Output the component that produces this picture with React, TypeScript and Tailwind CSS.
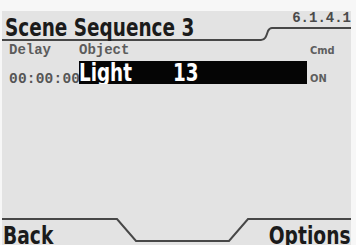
export default function App() {
  const big =
    "font-['DejaVu_Sans_Condensed','DejaVu_Sans',sans-serif] font-stretch-condensed font-bold";
  const mono = "font-['Liberation_Mono','DejaVu_Sans_Mono',monospace]";
  const small = "font-['DejaVu_Sans_Condensed','DejaVu_Sans',sans-serif] font-stretch-condensed font-bold";
  return (
    <div className="w-[356px] h-[245px] bg-[#f7f7f7] overflow-hidden pt-[11px]">
      <div className="ml-[2px] w-[349px] h-[234px] bg-[#e3e3e3] flex flex-col">
        {/* header */}
        <div className="flex items-start h-[30px] shrink-0">
          <div className="w-[259px] h-[30px] border-b-2 border-[#474747] pl-[3px] pt-[4px] overflow-visible whitespace-nowrap">
            <span className={`inline-block origin-left scale-x-[0.82] text-[25px] leading-none text-[#1b1b1b] ${big}`}>
              Scene Sequence 3
            </span>
          </div>
          <svg width="11" height="14" className="mt-[16px] shrink-0" viewBox="0 0 11 14">
            <path d="M0 13 C4 13 5 10 7 4 C8 2 9 1 11 1" stroke="#474747" strokeWidth="2" fill="none" />
          </svg>
          <div className="flex-1 h-[18px] border-b-2 border-[#474747] flex items-end justify-end">
            <span className={`text-[14px] leading-none font-bold text-[#4a4a4a] mb-[2px] ${mono}`}>6.1.4.1</span>
          </div>
        </div>
        {/* body */}
        <div className="grid grid-cols-[70px_228px_1fr] pl-[7px] pt-[2px] items-start">
          <div className={`text-[14px] leading-none text-[#5c5c5c] font-semibold ${mono}`}>Delay</div>
          <div className={`text-[14px] leading-none text-[#5c5c5c] font-semibold ${mono}`}>Object</div>
          <div className={`pl-[3px] pt-[2px] text-[11px] leading-none text-[#5e5e5e] ${small}`}>Cmd</div>
          <div className={`mt-[15px] text-[14.5px] leading-none text-[#555] font-bold whitespace-nowrap tracking-[0.2px] ${mono}`}>
            00:00:00
          </div>
          <div className="mt-[4px] h-[23px] bg-[#050505] flex items-start overflow-hidden whitespace-nowrap">
            <span className={`inline-block origin-left scale-x-[0.85] text-[24px] leading-none text-white ${big}`}>
              Light
            </span>
            <span className={`inline-block origin-left scale-x-[0.85] text-[24px] leading-none text-white ml-[32px] ${big}`}>
              13
            </span>
          </div>
          <div className={`mt-[16px] pl-[3px] text-[11px] leading-none text-[#5e5e5e] ${small}`}>ON</div>
        </div>
        {/* footer */}
        <div className="mt-auto flex items-start h-[27px] shrink-0">
          <div className="w-[113px] h-[27px] border-t-2 border-[#474747] pl-[1px] pt-[3px] whitespace-nowrap">
            <span className={`inline-block origin-left scale-x-[0.83] text-[25px] leading-none text-[#1b1b1b] ${big}`}>
              Back
            </span>
          </div>
          <svg width="22" height="24" className="shrink-0" viewBox="0 0 22 24">
            <path d="M0 1 L2 1 L21 23 L22 23" stroke="#474747" strokeWidth="2" fill="none" />
          </svg>
          <div className="w-[91px] h-[5px] mt-[22px] border-t-2 border-[#474747]" />
          <svg width="22" height="24" className="shrink-0" viewBox="0 0 22 24">
            <path d="M0 23 L1 23 L20 1 L22 1" stroke="#474747" strokeWidth="2" fill="none" />
          </svg>
          <div className="flex-1 h-[27px] border-t-2 border-[#474747] pt-[3px] flex justify-end whitespace-nowrap">
            <span className={`inline-block origin-right scale-x-[0.83] text-[25px] leading-none text-[#1b1b1b] ${big}`}>
              Options
            </span>
          </div>
        </div>
      </div>
    </div>
  );
}
